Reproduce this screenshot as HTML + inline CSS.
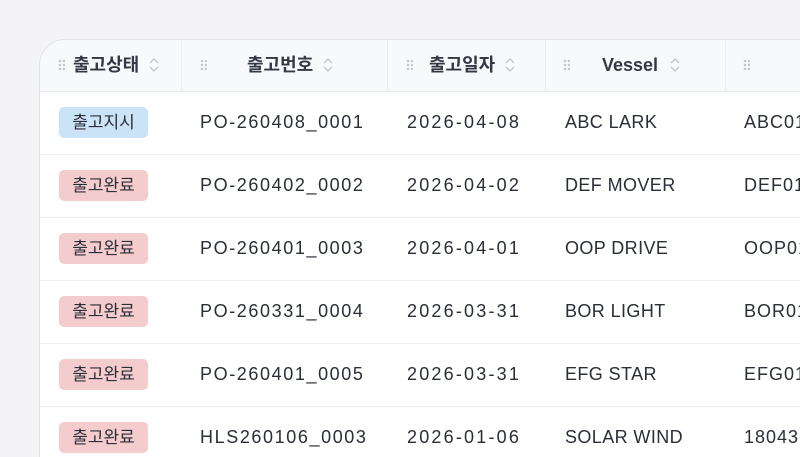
<!DOCTYPE html>
<html><head><meta charset="utf-8"><style>
html,body{margin:0;width:800px;height:457px;overflow:hidden}
body{background:#f4f4f6;font-family:"Liberation Sans","Noto Sans CJK KR",sans-serif;color:#2a2e37;position:relative}
.card{position:absolute;left:39px;top:39px;width:761px;height:418px;background:#fff;border:1px solid #e2e2e6;border-right:none;border-bottom:none;border-radius:26px 0 0 0;overflow:hidden}
.hd{position:absolute;left:0;top:0;right:0;height:51px;background:#f8f9fb;border-bottom:1px solid #e6e8ec}
.sep{position:absolute;top:0;height:51px;width:1px;background:#eceef1}
.ht{position:absolute;top:14px;line-height:22px;font-size:18px;font-weight:bold;color:#343843}
.grip{position:absolute;top:19px;width:7px;height:12px;background-image:radial-gradient(circle,#c4c7cc 1.2px,transparent 1.4px);background-size:4px 4px}
.sort{position:absolute;top:16px}
.row{position:absolute;left:0;right:0;height:62px;border-bottom:1px solid #eef0f2}
.c{position:absolute;top:19px;line-height:22px;font-size:18px;letter-spacing:0.4px;white-space:nowrap}
.n{letter-spacing:1.6px}.d{letter-spacing:2.2px}.l{letter-spacing:1px}
.b{position:absolute;left:19px;top:15px;width:89px;height:31px;border-radius:5px;font-size:17px;text-align:center;line-height:31px}
.blue{background:#cbe3f7}.red{background:#f5cccd}
</style></head><body>
<div class="card">
<div class="hd">
<div class="grip" style="left:18px"></div><div class="ht" style="left:33px">출고상태</div>
<svg class="sort" style="left:108px" width="12" height="18" viewBox="0 0 12 18"><path d="M2 7l4-4 4 4M2 11l4 4 4-4" fill="none" stroke="#c4c7cc" stroke-width="1.4"/></svg>
<div class="sep" style="left:141px"></div>
<div class="grip" style="left:160px"></div><div class="ht" style="left:207px">출고번호</div>
<svg class="sort" style="left:282px" width="12" height="18" viewBox="0 0 12 18"><path d="M2 7l4-4 4 4M2 11l4 4 4-4" fill="none" stroke="#c4c7cc" stroke-width="1.4"/></svg>
<div class="sep" style="left:347px"></div>
<div class="grip" style="left:366px"></div><div class="ht" style="left:389px">출고일자</div>
<svg class="sort" style="left:464px" width="12" height="18" viewBox="0 0 12 18"><path d="M2 7l4-4 4 4M2 11l4 4 4-4" fill="none" stroke="#c4c7cc" stroke-width="1.4"/></svg>
<div class="sep" style="left:505px"></div>
<div class="grip" style="left:523px"></div><div class="ht" style="left:562px">Vessel</div>
<svg class="sort" style="left:629px" width="12" height="18" viewBox="0 0 12 18"><path d="M2 7l4-4 4 4M2 11l4 4 4-4" fill="none" stroke="#c4c7cc" stroke-width="1.4"/></svg>
<div class="sep" style="left:685px"></div>
<div class="grip" style="left:703px"></div>
</div>
<div class="row" style="top:52px"><div class="b blue">출고지시</div><div class="c n" style="left:160px">PO-260408_0001</div><div class="c d" style="left:367px">2026-04-08</div><div class="c" style="left:525px">ABC LARK</div><div class="c l" style="left:704px">ABC01</div></div>
<div class="row" style="top:115px"><div class="b red">출고완료</div><div class="c n" style="left:160px">PO-260402_0002</div><div class="c d" style="left:367px">2026-04-02</div><div class="c" style="left:525px">DEF MOVER</div><div class="c l" style="left:704px">DEF01</div></div>
<div class="row" style="top:178px"><div class="b red">출고완료</div><div class="c n" style="left:160px">PO-260401_0003</div><div class="c d" style="left:367px">2026-04-01</div><div class="c" style="left:525px">OOP DRIVE</div><div class="c l" style="left:704px">OOP01</div></div>
<div class="row" style="top:241px"><div class="b red">출고완료</div><div class="c n" style="left:160px">PO-260331_0004</div><div class="c d" style="left:367px">2026-03-31</div><div class="c" style="left:525px">BOR LIGHT</div><div class="c l" style="left:704px">BOR01</div></div>
<div class="row" style="top:304px"><div class="b red">출고완료</div><div class="c n" style="left:160px">PO-260401_0005</div><div class="c d" style="left:367px">2026-03-31</div><div class="c" style="left:525px">EFG STAR</div><div class="c l" style="left:704px">EFG01</div></div>
<div class="row" style="top:367px"><div class="b red">출고완료</div><div class="c n" style="left:160px">HLS260106_0003</div><div class="c d" style="left:367px">2026-01-06</div><div class="c" style="left:525px">SOLAR WIND</div><div class="c l" style="left:704px">18043</div></div>
</div>
</body></html>
